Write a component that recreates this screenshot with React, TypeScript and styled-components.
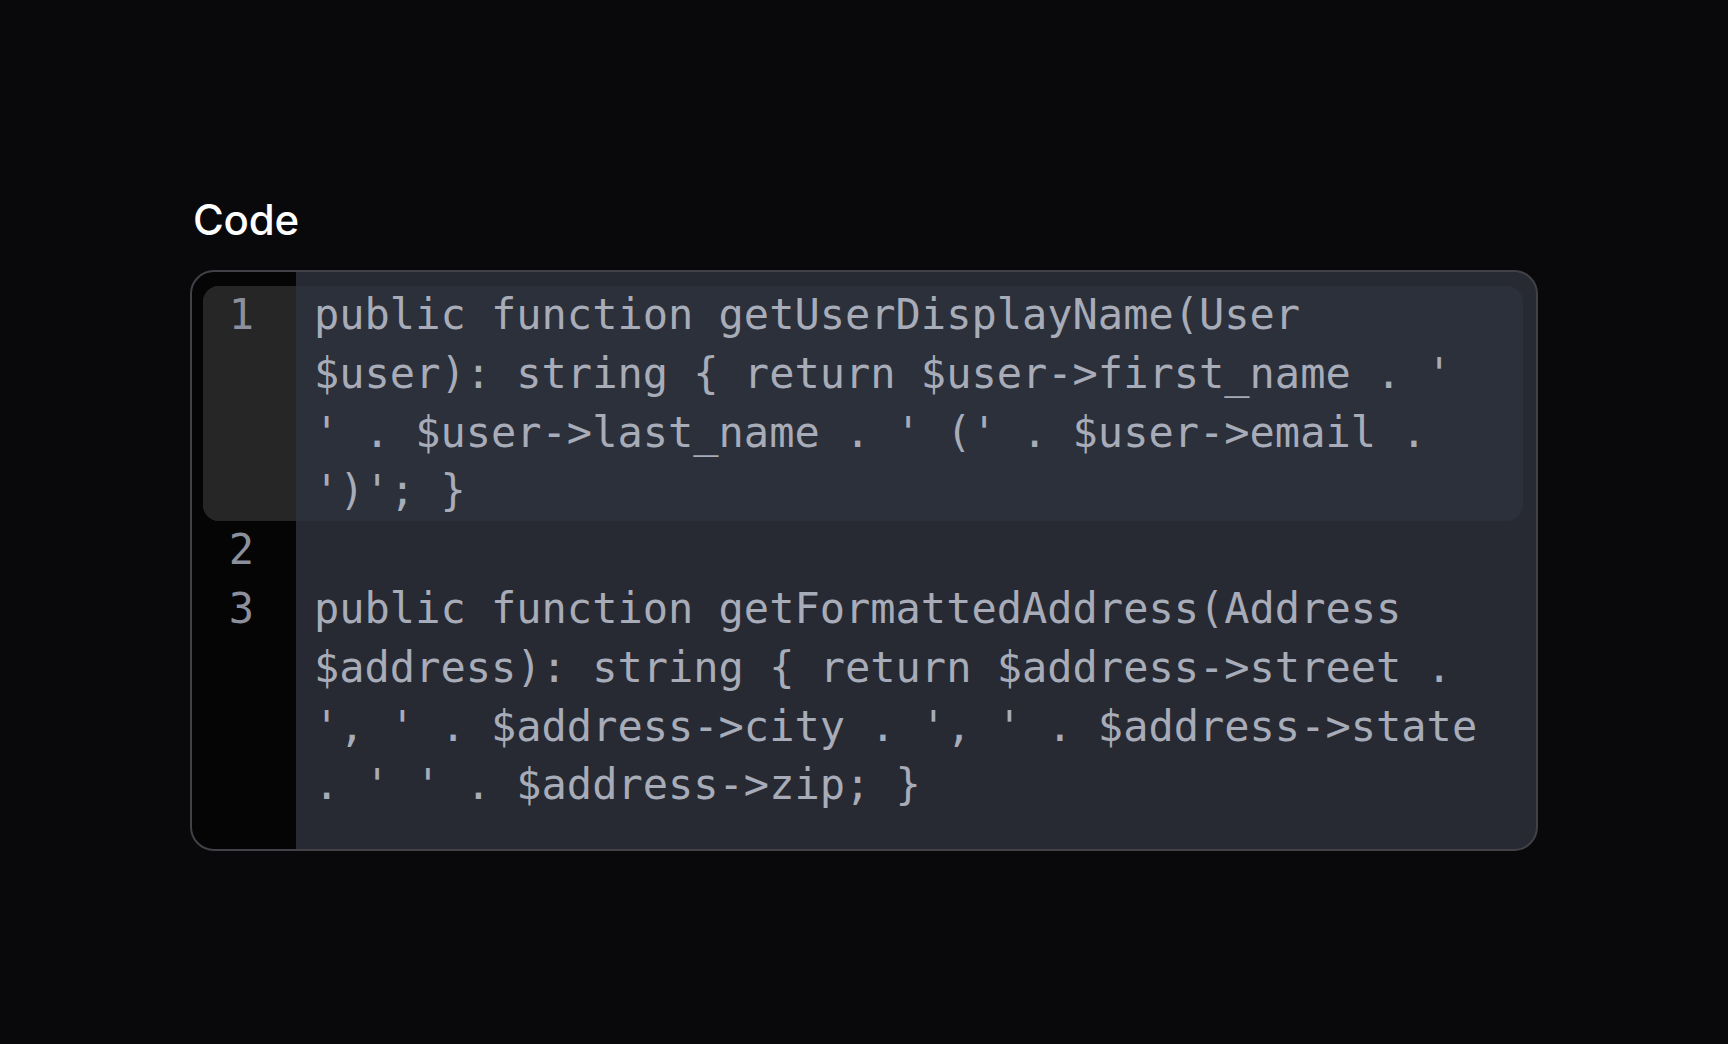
import React from "react";
import styled, { createGlobalStyle } from "styled-components";

const GlobalStyle = createGlobalStyle`
  html, body {
    margin: 0;
    padding: 0;
    background: #09090b;
  }
  body {
    font-family: "Inter", "Liberation Sans", sans-serif;
  }
`;

const Page = styled.main`
  min-height: 1044px;
  box-sizing: border-box;
  padding: 195px 190px 0 190px;
  background: #09090b;
`;

const Label = styled.h2`
  margin: 0 0 25px 3px;
  font-family: "Inter", "Liberation Sans", sans-serif;
  font-size: 42px;
  line-height: 50px;
  font-weight: 500;
  color: #ffffff;
  letter-spacing: -0.2px;
`;

const Editor = styled.div`
  width: 1348px;
  box-sizing: border-box;
  border: 2px solid #414147;
  border-radius: 24px;
  overflow: hidden;
  padding: 14px 13px 34px 11px;
  background: linear-gradient(to right, #050506 0, #050506 104px, #272a33 104px, #272a33 100%);
`;

const Row = styled.div<{ $active?: boolean }>`
  display: grid;
  grid-template-columns: 93px 1fr;
  border-radius: 16px;
  overflow: hidden;
  background: ${(p) => (p.$active ? "#2c303a" : "transparent")};
`;

const LineNo = styled.div<{ $active?: boolean }>`
  box-sizing: border-box;
  padding: 0 42px 0 0;
  text-align: right;
  font-family: "DejaVu Sans Mono", "Liberation Mono", monospace;
  font-size: 42px;
  line-height: 58.8px;
  color: #8b909c;
  background: ${(p) => (p.$active ? "#262626" : "transparent")};
`;

const CodeText = styled.pre`
  margin: 0;
  padding: 0 34px 0 18px;
  font-family: "DejaVu Sans Mono", "Liberation Mono", monospace;
  font-size: 42px;
  line-height: 58.8px;
  color: #a7acb8;
  white-space: pre-wrap;
  word-break: normal;
  overflow-wrap: normal;
  min-height: 58.8px;
`;

const lines = [
  "public function getUserDisplayName(User $user): string { return $user->first_name . ' ' . $user->last_name . ' (' . $user->email . ')'; }",
  "",
  "public function getFormattedAddress(Address $address): string { return $address->street . ', ' . $address->city . ', ' . $address->state . ' ' . $address->zip; }",
];

export default function App() {
  return (
    <>
      <GlobalStyle />
      <Page>
        <Label>Code</Label>
        <Editor>
          {lines.map((line, i) => (
            <Row key={i} $active={i === 0}>
              <LineNo $active={i === 0}>{i + 1}</LineNo>
              <CodeText>{line}</CodeText>
            </Row>
          ))}
        </Editor>
      </Page>
    </>
  );
}
